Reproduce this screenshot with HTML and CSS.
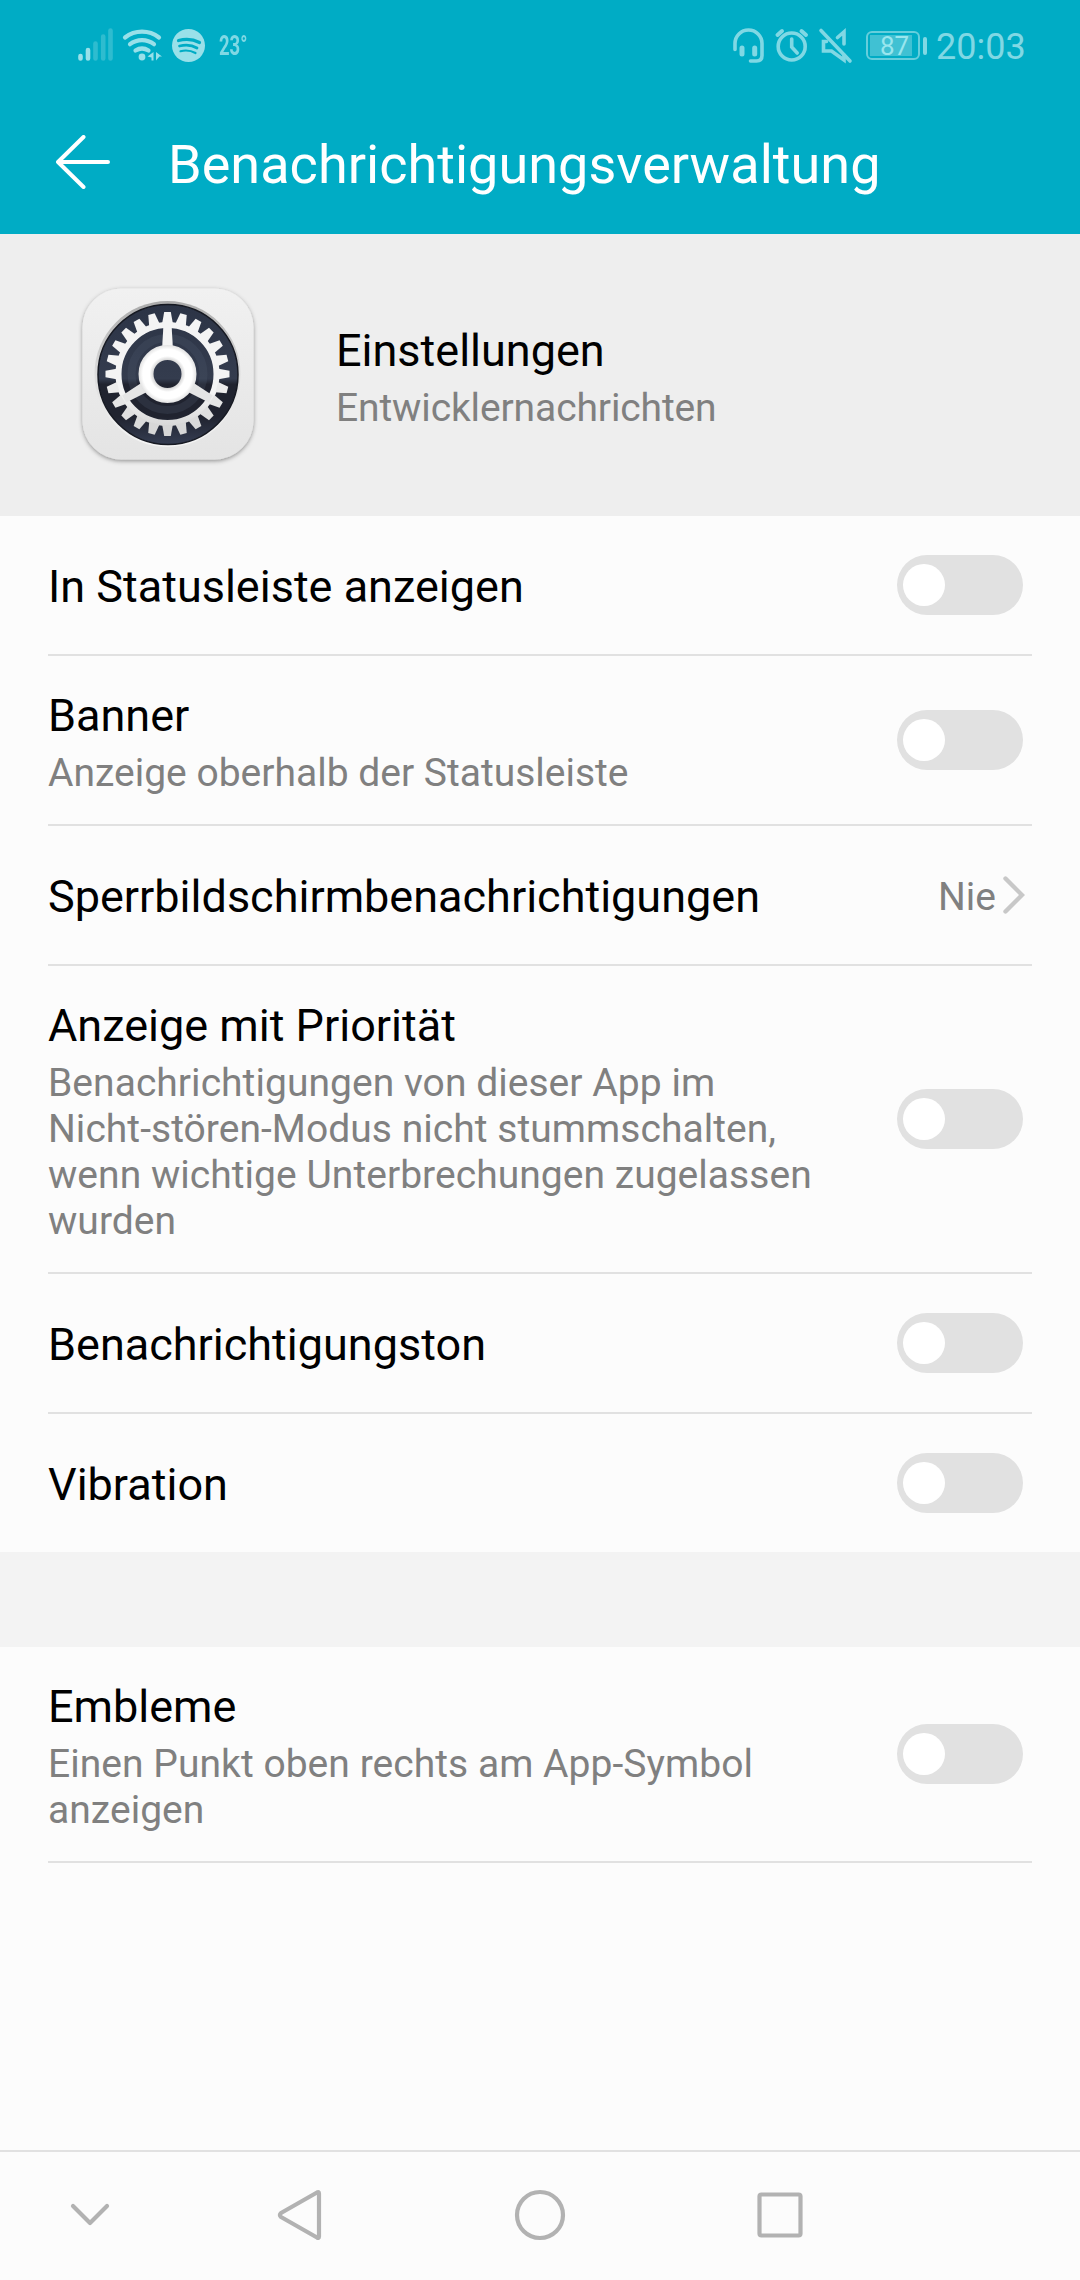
FILE: index.html
```html
<!DOCTYPE html>
<html lang="de">
<head>
<meta charset="utf-8">
<title>Benachrichtigungsverwaltung</title>
<link rel="stylesheet" href="styles.css">
</head>
<body>
<header class="top">
  <div class="status">
    <svg class="status-left" width="122" height="40" viewBox="0 0 122 40" fill="none" stroke="#99e0e9" stroke-linecap="round">
      <g stroke-width="4.6">
        <path d="M2.5 34v2.500M10 28v8.500"/>
        <path opacity=".3" d="M17.500 21.500v15M25.200 14.500v22M32.500 8.500v28"/>
      </g>
      <g stroke-width="4.200">
        <path d="M47 15.500a27.500 27.500 0 0 1 34 0M52 22.200a19.500 19.500 0 0 1 24 0M57.500 28.600a12 12 0 0 1 13 0"/>
      </g>
      <circle cx="64" cy="35" r="3.400" fill="#99e0e9" stroke="none"/>
      <path d="M69.500 34.500l6-4.500v8.500h-2v-3zM78 30l6 4.500h-2.500l-3.500 4z" fill="#99e0e9" stroke="none"/>
      <circle cx="110.500" cy="23.500" r="16.500" fill="#99e0e9" stroke="none"/>
      <g stroke="#00acc5">
        <path stroke-width="3.200" d="M100.500 18.500q11.500-3 21 2"/>
        <path stroke-width="2.700" d="M101.500 24q10-2.500 17.500 2"/>
        <path stroke-width="2.200" d="M102.500 29.200q8-2 15 1.800"/>
      </g>
    </svg>
    <span class="temp">23°</span>
    <svg class="status-right" width="120" height="40" viewBox="0 0 120 40" fill="none" stroke="#80d8e4" stroke-width="3.600" stroke-linecap="round">
      <path d="M2 25.500v-6a13.500 13.500 0 0 1 27 0v12q0 5.500-5.500 5.500h-6"/>
      <path stroke-width="5" d="M9 24v6M21.700 24v6"/>
      <circle cx="58.700" cy="22.500" r="13.500"/>
      <path d="M58.700 15v8l5.500 6"/>
      <path d="M44.500 11l4.500-4M73 11l-4.500-4" stroke-width="4"/>
      <path d="M88 6.500l29 30.500"/>
      <path d="M93.500 17.500h-3v9.500h8l12.500 9v-5M111 20V8l-6.500 5.500"/>
    </svg>
    <span class="battery"><span class="charge">87</span></span><span class="cap"></span>
    <span class="clock">20:03</span>
  </div>
  <div class="bar">
    <svg class="back" width="54" height="54" viewBox="0 0 54 54" fill="none" stroke="#fff" stroke-width="4" stroke-linecap="round" stroke-linejoin="round"><path d="M52 27H2M27.500 2L2 27l25.500 25"/></svg>
    <h1>Benachrichtigungsverwaltung</h1>
  </div>
</header>
<section class="app">
  <svg class="app-icon" width="180" height="186" viewBox="0 0 180 186">
    <defs>
      <linearGradient id="plate" x1="0" y1="0" x2="0" y2="1"><stop offset="0" stop-color="#f1f1f1"/><stop offset="1" stop-color="#e4e4e4"/></linearGradient>
      <linearGradient id="dial" x1="0" y1="0" x2="0" y2="1"><stop offset="0" stop-color="#2c3446"/><stop offset=".53" stop-color="#343c4e"/><stop offset=".57" stop-color="#20232f"/><stop offset=".8" stop-color="#20232f"/><stop offset="1" stop-color="#353d52"/></linearGradient>
      <linearGradient id="rim" x1="0" y1="0" x2="0" y2="1"><stop offset="0" stop-color="#aaa"/><stop offset=".5" stop-color="#ddd"/><stop offset="1" stop-color="#f5f5f5"/></linearGradient>
      <linearGradient id="metal" gradientUnits="userSpaceOnUse" x1="0" y1="-62" x2="0" y2="62"><stop offset="0" stop-color="#f4f4f4"/><stop offset=".65" stop-color="#f4f4f4"/><stop offset="1" stop-color="#d0d0d0"/></linearGradient>
      <radialGradient id="hub" gradientUnits="userSpaceOnUse" cx="89.500" cy="90" r="29"><stop offset=".48" stop-color="#d4d4d4"/><stop offset=".62" stop-color="#fff"/><stop offset=".85" stop-color="#fff"/><stop offset="1" stop-color="#e2e2e2"/></radialGradient>
      <filter id="soft" x="-10%" y="-10%" width="120%" height="125%"><feDropShadow dx="0" dy="1.500" stdDeviation="2" flood-color="#000" flood-opacity=".4"/></filter>
    </defs>
    <rect x="4.500" y="4.500" width="171" height="171" rx="39" fill="url(#plate)" filter="url(#soft)"/>
    <circle cx="89.500" cy="90" r="73" fill="url(#rim)"/>
    <circle cx="90" cy="90.500" r="70" fill="url(#dial)" stroke="#161922" stroke-width="1.500"/>
    <circle cx="89.500" cy="90" r="36" fill="none" stroke="#505a70" stroke-width="8" opacity=".25"/>
    <g id="gear" transform="translate(89.500 90)">
      <circle r="49" fill="none" stroke="url(#metal)" stroke-width="6"/>
    </g>
    <circle cx="89.500" cy="90" r="21.500" fill="none" stroke="url(#hub)" stroke-width="15"/>
  </svg>
  <div class="app-text">
    <div class="title">Einstellungen</div>
    <div class="sub">Entwicklernachrichten</div>
  </div>
</section>
<main>
  <section class="group">
    <div class="row"><div class="text"><div class="title">In Statusleiste anzeigen</div></div><span class="switch"></span></div>
    <div class="row two"><div class="text"><div class="title">Banner</div><div class="sub">Anzeige oberhalb der Statusleiste</div></div><span class="switch"></span></div>
    <div class="row"><div class="text"><div class="title">Sperrbildschirmbenachrichtigungen</div></div><span class="value">Nie</span><svg class="chevron" width="22" height="38" viewBox="0 0 22 38" fill="none" stroke="#c8c8c8" stroke-width="4.400" stroke-linecap="round"><path d="M2.500 2.500L19 19 2.500 35.500"/></svg></div>
    <div class="row four"><div class="text"><div class="title">Anzeige mit Priorität</div><div class="sub">Benachrichtigungen von dieser App im<br>Nicht-stören-Modus nicht stummschalten,<br>wenn wichtige Unterbrechungen zugelassen<br>wurden</div></div><span class="switch"></span></div>
    <div class="row"><div class="text"><div class="title">Benachrichtigungston</div></div><span class="switch"></span></div>
    <div class="row last"><div class="text"><div class="title">Vibration</div></div><span class="switch"></span></div>
  </section>
  <section class="group second">
    <div class="row three"><div class="text"><div class="title">Embleme</div><div class="sub">Einen Punkt oben rechts am App-Symbol<br>anzeigen</div></div><span class="switch"></span></div>
  </section>
</main>
<nav class="nav">
  <svg width="1080" height="128" viewBox="0 0 1080 128" fill="none" stroke="#b2b2b2" stroke-width="4.200" stroke-linecap="round" stroke-linejoin="round">
    <path d="M73 54L90 71l17-17"/>
    <path d="M319 41.500v43q0 2-2 1L281 65q-2-2 0-4l36-20.500q2-1 2 1z"/>
    <circle cx="540" cy="63" r="23"/>
    <rect x="759.500" y="42.500" width="41" height="41" rx="2"/>
  </svg>
</nav>
<script src="gear.js"></script>
</body>
</html>
```
FILE: gear.js
```js
// Adds the teeth and three spokes to the settings gear.
const gear = document.getElementById('gear');
const TEETH = 24;
function part(d, angle) {
  const p = document.createElementNS('http://www.w3.org/2000/svg', 'path');
  p.setAttribute('d', d);
  // Parts on the lower half fall into shade.
  const shade = Math.round(244 - 30 * Math.max(0, -Math.cos(angle * Math.PI / 180)));
  p.setAttribute('fill', `rgb(${shade},${shade},${shade})`);
  p.setAttribute('transform', `rotate(${angle})`);
  gear.appendChild(p);
}
for (let i = 0; i < TEETH; i++) part('M-5.300 -51L-3.300 -62H3.300L5.300 -51z', i * 360 / TEETH);
for (let i = 0; i < 3; i++) part('M-4 -50L-5.500 -24H5.500L4 -50z', i * 120);
```
FILE: styles.css
```css
* { box-sizing: border-box; }
body {
  margin: 0;
  width: 1080px;
  height: 2280px;
  display: flex;
  flex-direction: column;
  overflow: hidden;
  background: #fcfcfc;
  color: #000;
  font-family: Roboto, "Noto Sans", sans-serif;
}
svg { display: block; flex: none; }
.top { height: 234px; background: #00acc5; }
.status {
  height: 90px;
  padding: 22px 0 0 78px;
  display: flex;
  align-items: flex-start;
  color: #80d8e4;
}
.status-left { overflow: visible; }
.temp {
  width: 30px;
  margin: -1px 0 0 19px;
  font-size: 28px;
  font-weight: 700;
  line-height: 50px;
  transform: scaleX(.66);
  transform-origin: 0 0;
}
.status-right { margin: 2px 0 0 484px; overflow: visible; }
.battery {
  width: 54px;
  height: 29px;
  margin: 9px 0 0 13px;
  padding: 2px;
  border: 2px solid #66cedc;
  border-radius: 6px;
}
.charge {
  display: block;
  width: 42px;
  height: 21px;
  background: #40c1d3;
  font-size: 26px;
  line-height: 23px;
  padding-left: 10px;
  color: #99e6ee;
}
.cap { width: 4px; height: 18px; margin: 15px 0 0 3px; border-radius: 2px; background: #80d8e4; }
.clock { margin: 4px 0 0 9px; font-size: 36px; line-height: 42px; }
.bar { display: flex; align-items: center; height: 144px; padding: 0 0 0 56px; color: #fff; }
h1 { margin: 5px 0 0 58px; font-size: 54px; font-weight: 400; line-height: 64px; letter-spacing: .03px; }
.app { height: 282px; padding: 50px 0 0 78px; display: flex; background: #eee; }
.app-text { margin: 40px 0 0 78px; }
.app-text .sub { letter-spacing: -.12px; }
.title { font-size: 45px; line-height: 53px; white-space: nowrap; }
.sub { font-size: 39px; line-height: 46px; color: #808080; white-space: nowrap; padding-top: 8px; }
.row {
  height: 140px;
  margin: 0 48px;
  padding-right: 9px;
  display: flex;
  align-items: center;
  border-bottom: 2px solid #e1e1e1;
}
.text { flex: 1; padding-top: 2px; }
.two { height: 170px; }
.three { height: 216px; }
.four { height: 308px; }
.two .text, .three .text, .four .text { padding-top: 4px; }
.three .sub, .four .sub { letter-spacing: .04px; }
.last { height: 138px; border: 0; }
.second { border-top: 95px solid #f3f3f3; }
.switch {
  width: 126px;
  height: 60px;
  padding: 9px 6px;
  border-radius: 30px;
  background: #e1e1e1;
}
.switch::before { content: ""; display: block; width: 42px; height: 42px; border-radius: 50%; background: #fff; }
.value { font-size: 39px; line-height: 46px; color: #808080; padding-top: 3px; }
.chevron { margin: 0 -2px 0 7px; }
.nav { margin-top: auto; height: 130px; border-top: 2px solid #e1e1e1; }
```
